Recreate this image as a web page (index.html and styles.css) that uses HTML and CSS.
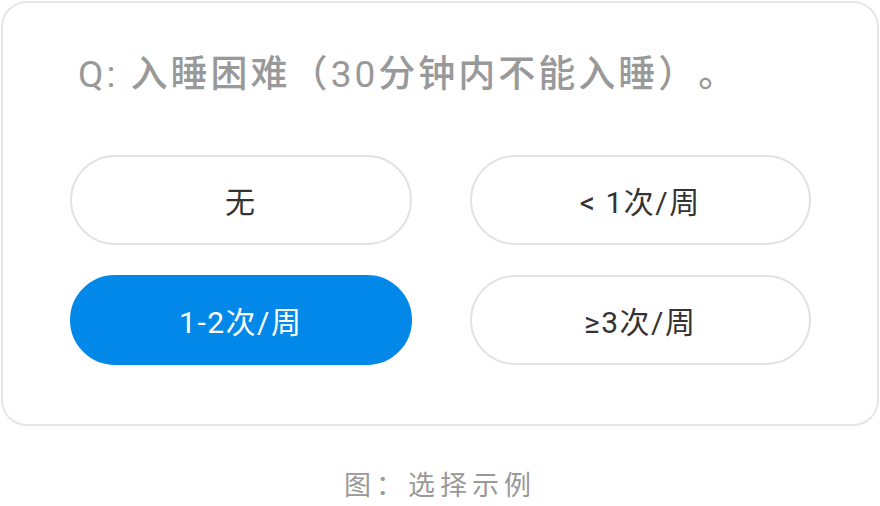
FILE: index.html
```html
<!DOCTYPE html>
<html lang="zh-CN">
<head>
<meta charset="utf-8">
<title>选择示例</title>
<link rel="stylesheet" href="styles.css">
</head>
<body>
  <section class="card">
    <p class="question"><span class="latin">Q:</span> 入睡困难（<span class="latin">30</span>分钟内不能入睡）。</p>
    <div class="options">
      <button class="option">无</button>
      <button class="option">&lt; 1次/周</button>
      <button class="option selected">1-2次/周</button>
      <button class="option">≥3次/周</button>
    </div>
  </section>
  <p class="caption">图：选择示例</p>
</body>
</html>
```
FILE: styles.css
```css
html, body {
  margin: 0;
  padding: 0;
  background: #ffffff;
}

body {
  width: 880px;
  height: 506px;
  overflow: hidden;
  font-family: Roboto, "Noto Sans CJK SC", sans-serif;
  text-spacing-trim: space-all;
}

.card {
  box-sizing: border-box;
  width: 878px;
  margin: 1px 0 0 1px;
  padding: 47px 66px 59px 67px;
  border: 2px solid #e6e6e6;
  border-radius: 26px;
  display: flex;
  flex-direction: column;
  gap: 55px;
}

.question {
  margin: 0;
  padding-left: 8px;
  line-height: 50px;
  font-size: 37px;
  font-weight: 500;
  letter-spacing: 3px;
  color: #999999;
  white-space: nowrap;
}

/* Roboto digits and letters sit lighter than the CJK medium weight */
.question .latin {
  font-weight: 400;
}

.options {
  display: grid;
  grid-template-columns: 1fr 1fr;
  column-gap: 58px;
  row-gap: 30px;
}

.option {
  box-sizing: border-box;
  height: 90px;
  border: 2px solid #e3e3e3;
  border-radius: 45px;
  background: #ffffff;
  font-family: Roboto, "Noto Sans CJK SC", sans-serif;
  text-spacing-trim: space-all;
  font-size: 30px;
  letter-spacing: 1.5px;
  color: #333333;
  padding: 0;
}

.option.selected {
  background: #0288e9;
  border-color: #0288e9;
  color: #ffffff;
}

.caption {
  margin: 40px 0 0;
  line-height: 40px;
  text-align: center;
  font-size: 27px;
  letter-spacing: 5px;
  color: #999999;
}
```
